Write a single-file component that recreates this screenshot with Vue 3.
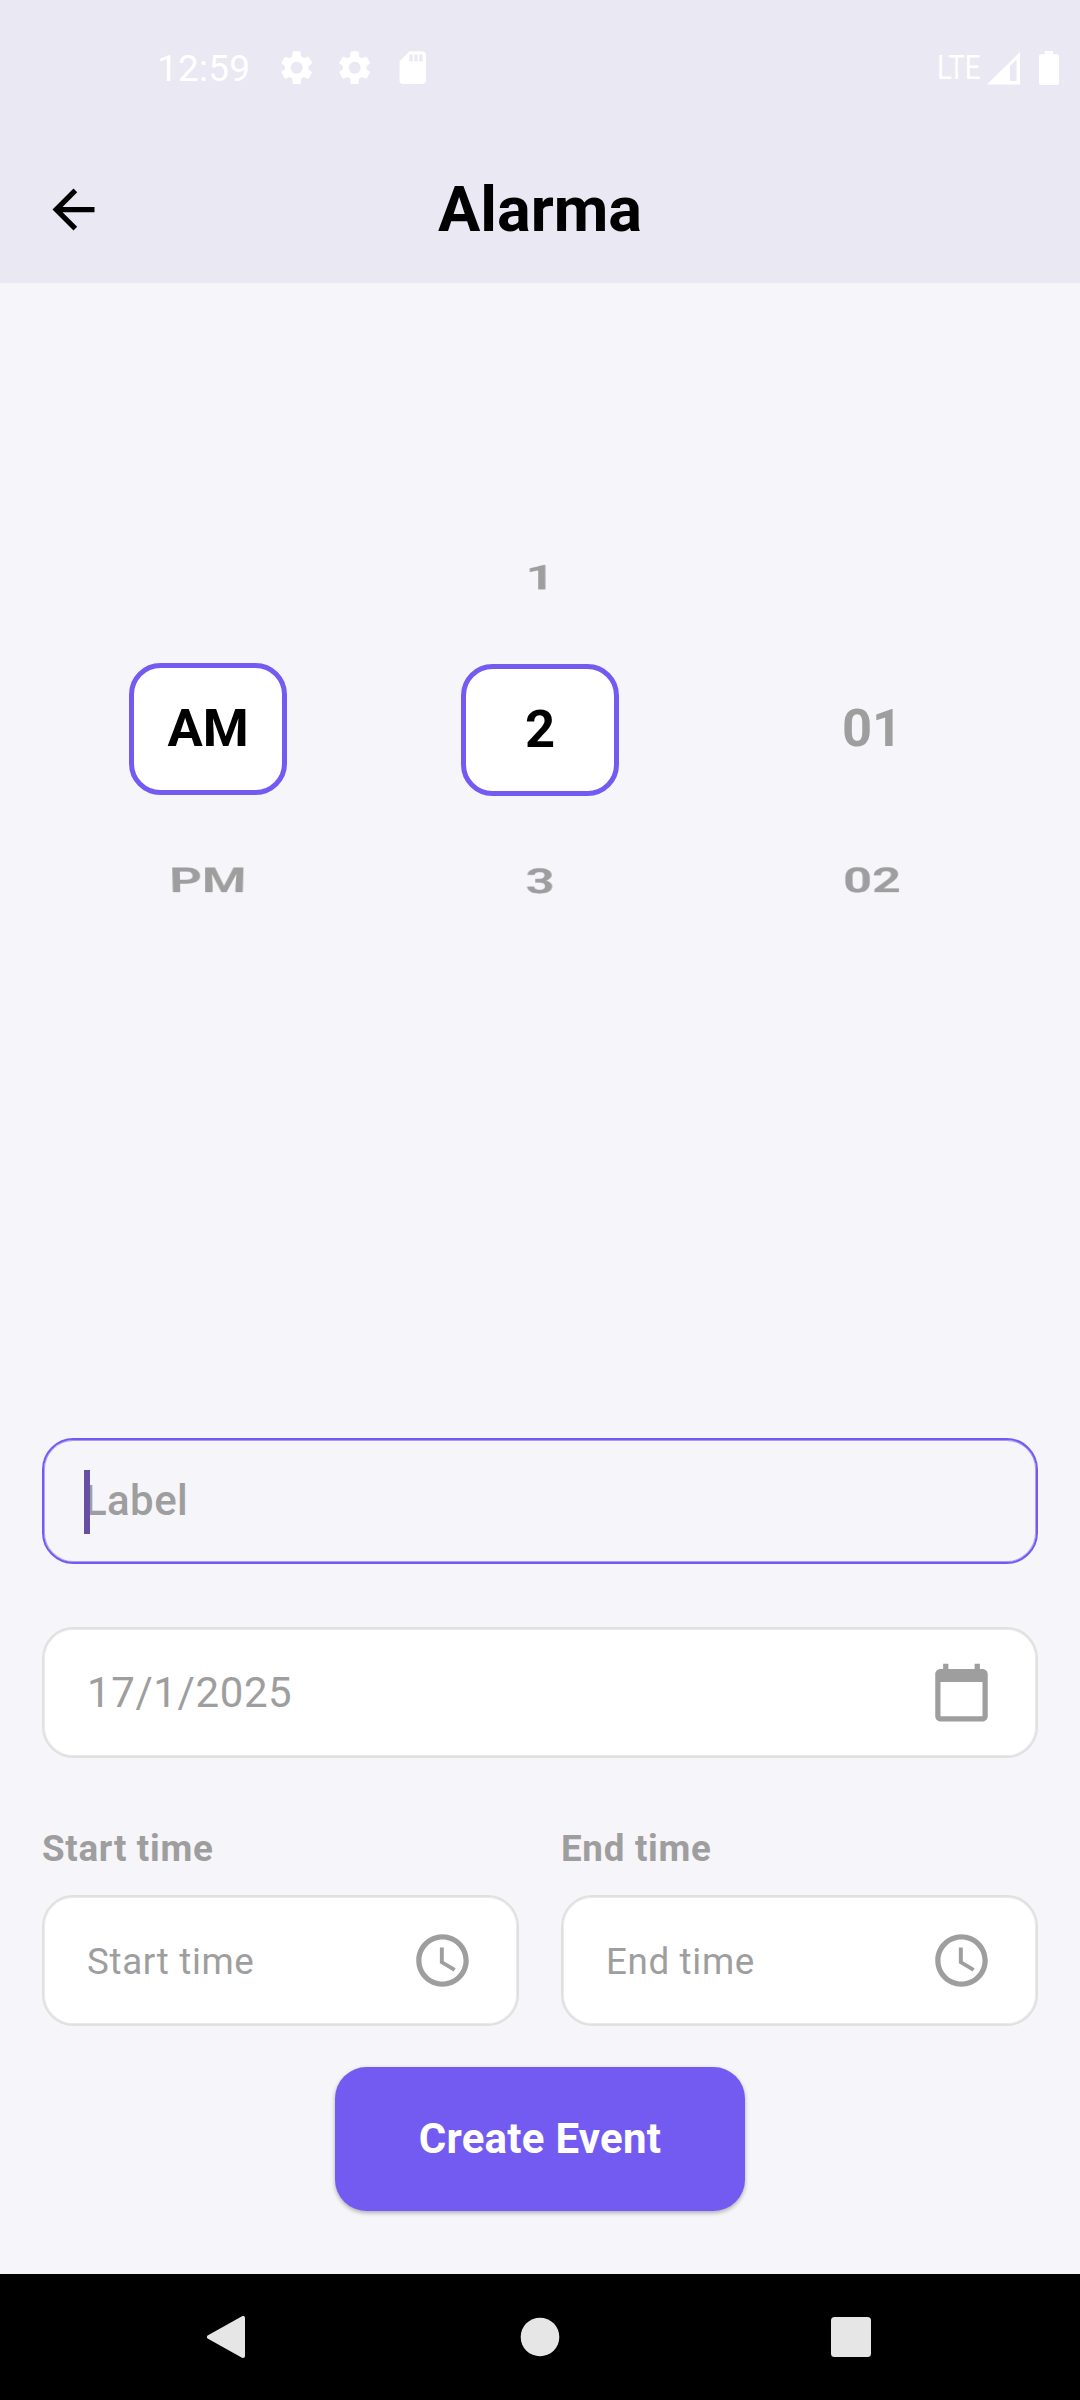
<script setup>
const columns = [
  { id: 'period', items: [null, { text: 'AM', active: true }, { text: 'PM' }] },
  { id: 'hour', items: [{ text: '1' }, { text: '2', active: true }, { text: '3' }] },
  { id: 'minute', items: [null, { text: '01' }, { text: '02' }] },
]
const times = ['Start time', 'End time']
const gear =
  'M19.14 12.94c.04-.3.06-.61.06-.94 0-.32-.02-.64-.07-.94l2.03-1.58c.18-.14.23-.41.12-.61l-1.92-3.32c-.12-.22-.37-.29-.59-.22l-2.39.96c-.5-.38-1.03-.7-1.62-.94L14.4 2.4c-.04-.24-.24-.41-.48-.41h-3.84c-.24 0-.43.17-.47.41l-.36 2.95c-.59.24-1.13.57-1.62.94l-2.39-.96c-.22-.08-.47 0-.59.22L2.74 8.87c-.12.21-.08.47.12.61l2.03 1.58c-.05.3-.09.63-.09.94s.02.64.07.94l-2.03 1.58c-.18.14-.23.41-.12.61l1.92 3.32c.12.22.37.29.59.22l2.39-.96c.5.38 1.03.7 1.62.94l.36 2.95c.05.24.24.41.48.41h3.84c.24 0 .44-.17.47-.41l.36-2.95c.59-.24 1.13-.56 1.62-.94l2.39.96c.22.08.47 0 .59-.22l1.92-3.32c.12-.22.07-.47-.12-.61l-2.01-1.58zM12 15.6c-1.98 0-3.6-1.62-3.6-3.6s1.62-3.6 3.6-3.6 3.6 1.62 3.6 3.6-1.62 3.6-3.6 3.6z'
</script>

<template>
  <div class="screen">
    <header class="top">
      <div class="status">
        <div class="status-left">
          <span class="clock">12:59</span>
          <svg v-for="n in 2" :key="n" class="status-icon" viewBox="0 0 24 24"><path :d="gear" /></svg>
          <svg class="status-icon" viewBox="0 0 24 24">
            <path d="M18 2h-8L4.02 8 4 20c0 1.1.9 2 2 2h12c1.1 0 2-.9 2-2V4c0-1.1-.9-2-2-2zm-6 6h-2V4h2v4zm3 0h-2V4h2v4zm3 0h-2V4h2v4z" />
          </svg>
        </div>
        <div class="status-right">
          <span class="lte"><span>LTE</span></span>
          <svg class="signal" viewBox="0 0 33 33">
            <path fill-rule="evenodd" d="M0 32.5 33 0v32.5zM23 14v15h6.6V7.6z" />
          </svg>
          <svg class="battery" viewBox="0 0 20 34">
            <path d="M5.8 0H14v3.3h4a2 2 0 0 1 2 2V32a2 2 0 0 1-2 2H2a2 2 0 0 1-2-2V5.3a2 2 0 0 1 2-2h3.8z" />
          </svg>
        </div>
      </div>
      <div class="appbar">
        <svg class="icon back" viewBox="0 0 24 24">
          <path d="M20 11H7.83l5.59-5.59L12 4l-8 8 8 8 1.41-1.41L7.83 13H20v-2z" />
        </svg>
        <h1>Alarma</h1>
        <span class="back-spacer"></span>
      </div>
    </header>

    <main class="content">
      <section class="picker">
        <div v-for="col in columns" :key="col.id" class="column" :class="col.id">
          <div v-for="(item, i) in col.items" :key="i" class="row">
            <div v-if="item" class="cell" :class="{ active: item.active, above: i === 0, below: i === 2 }">
              <span>{{ item.text }}</span>
            </div>
          </div>
        </div>
      </section>

      <div class="field label-field">
        <span class="cursor"></span>
        <span>Label</span>
      </div>

      <div class="field date-field">
        <span>17/1/2025</span>
        <svg class="icon" viewBox="0 0 24 24">
          <path d="M20 3h-1V1h-2v2H7V1H5v2H4c-1.1 0-2 .9-2 2v16c0 1.1.9 2 2 2h16c1.1 0 2-.9 2-2V5c0-1.1-.9-2-2-2zm0 18H4V8h16v13z" />
        </svg>
      </div>

      <section class="times">
        <div v-for="t in times" :key="t" class="time">
          <div class="caption">{{ t }}</div>
          <div class="field time-field">
            <span>{{ t }}</span>
            <svg class="icon" viewBox="0 0 24 24">
              <path d="M11.99 2C6.47 2 2 6.48 2 12s4.47 10 9.99 10C17.52 22 22 17.52 22 12S17.52 2 11.99 2zM12 20c-4.42 0-8-3.58-8-8s3.58-8 8-8 8 3.58 8 8-3.58 8-8 8zm.5-13H11v6l5.25 3.15.75-1.23-4.5-2.67z" />
            </svg>
          </div>
        </div>
      </section>

      <button class="create">Create Event</button>
    </main>

    <nav class="navbar">
      <svg width="38" height="42" viewBox="0 0 38 42">
        <path d="M2 21 36 2v38z" stroke="#e6e6e6" stroke-width="4" stroke-linejoin="round" />
      </svg>
      <svg width="40" height="40" viewBox="0 0 40 40"><circle cx="20" cy="20" r="19.3" /></svg>
      <svg width="40" height="40" viewBox="0 0 40 40"><rect width="40" height="40" rx="3.5" /></svg>
    </nav>
  </div>
</template>

<style>
body {
  margin: 0;
}
</style>

<style scoped>
.screen {
  width: 1080px;
  height: 2400px;
  display: flex;
  flex-direction: column;
  background: #f6f5fa;
  font-family: Roboto, sans-serif;
  color: #9e9e9e;
  overflow: hidden;
}
.top {
  height: 283px;
  background: #eae8f3;
}
.status {
  height: 136px;
  box-sizing: border-box;
  padding: 0 21px 0 157px;
  display: flex;
  justify-content: space-between;
  align-items: center;
  color: #fff;
  fill: #fff;
}
.status-left {
  display: flex;
  align-items: center;
}
.clock {
  width: 120.2px;
  font-size: 37px;
  letter-spacing: 0.2px;
  line-height: 44px;
  padding-top: 2px;
}
.status-icon {
  width: 39.4px;
  height: 39.4px;
  margin-right: 18.4px;
}
.status-right {
  display: flex;
  align-items: center;
}
.lte {
  width: 50px;
  font-size: 33px;
  line-height: 40px;
}
.lte span {
  display: inline-block;
  transform: scaleX(0.84);
  transform-origin: 0 50%;
}
.signal {
  width: 33px;
  height: 33px;
}
.battery {
  width: 20px;
  height: 34px;
  margin-left: 19px;
}
.appbar {
  height: 147px;
  padding: 0 42px;
  display: flex;
  align-items: center;
}
.icon {
  flex: none;
  width: 63px;
  height: 63px;
  fill: #9e9e9e;
}
.back {
  fill: #000;
}
.back-spacer {
  width: 63px;
}
h1 {
  flex: 1;
  margin: 0;
  text-align: center;
  font-size: 63px;
  line-height: 74px;
  font-weight: 700;
  color: #000;
}
.content {
  flex: 1;
  padding: 0 42px;
  display: flex;
  flex-direction: column;
}
.picker {
  height: 935px;
  padding-top: 218px;
  display: flex;
}
.column {
  flex: 1;
}
.hour {
  padding-top: 1px;
}
.row {
  height: 152px;
  display: flex;
  align-items: center;
  justify-content: center;
}
.cell {
  font-size: 52.5px;
  line-height: 62px;
  font-weight: 700;
}
.cell span {
  display: block;
  padding-bottom: 2px;
}
.cell.active {
  box-sizing: border-box;
  width: 157.5px;
  height: 131.25px;
  border: 5.25px solid #735bf2;
  border-radius: 31.5px;
  background: #fff;
  color: #000;
  display: flex;
  align-items: center;
  justify-content: center;
}
.above {
  transform: perspective(1450px) scaleX(0.965) rotateX(48deg);
}
.below {
  transform: perspective(1450px) scaleX(0.965) rotateX(-48deg);
}
.field {
  box-sizing: border-box;
  height: 131px;
  border: 2px solid #e0e0e0;
  border-radius: 31.5px;
  background: #fff;
  box-shadow: inset 0 0 0 0.9px rgba(224, 224, 224, 0.7);
  display: flex;
  align-items: center;
  justify-content: space-between;
  padding: 0 43px;
}
.label-field {
  position: relative;
  margin-top: 2px;
  height: 126px;
  border-color: #735bf2;
  box-shadow: inset 0 0 0 0.9px rgba(115, 91, 242, 0.6);
  background: transparent;
  font-size: 42px;
  font-weight: 500;
  letter-spacing: 0.4px;
  padding: 0 40px 2px;
}
.cursor {
  position: absolute;
  left: 40px;
  top: 30px;
  width: 5.5px;
  height: 64px;
  background: #6750a4;
}
.date-field {
  margin-top: 63px;
  font-size: 42px;
  letter-spacing: 0.6px;
}
.times {
  display: flex;
  gap: 42px;
  margin-top: 67px;
}
.time {
  flex: 1;
}
.caption {
  height: 70px;
  font-size: 36.75px;
  line-height: 48px;
  font-weight: 700;
  letter-spacing: 0.7px;
}
.time-field {
  font-size: 36.75px;
  letter-spacing: 0.65px;
}
.time-field span {
  padding-top: 1px;
}
.create {
  align-self: center;
  width: 410.5px;
  height: 144.5px;
  margin: 40.5px 0 0;
  padding: 0;
  border: 0;
  border-radius: 31.5px;
  background: #735bf2;
  box-shadow: 0 2px 4px rgba(0, 0, 0, 0.3);
  color: #fff;
  font: 700 42px/50px Roboto, sans-serif;
  letter-spacing: 0.27px;
}
.navbar {
  height: 126px;
  background: #000;
  fill: #e6e6e6;
  display: grid;
  grid-template-columns: 313px 311px 1fr;
  align-items: center;
  padding: 0 0 0 207px;
}
</style>
